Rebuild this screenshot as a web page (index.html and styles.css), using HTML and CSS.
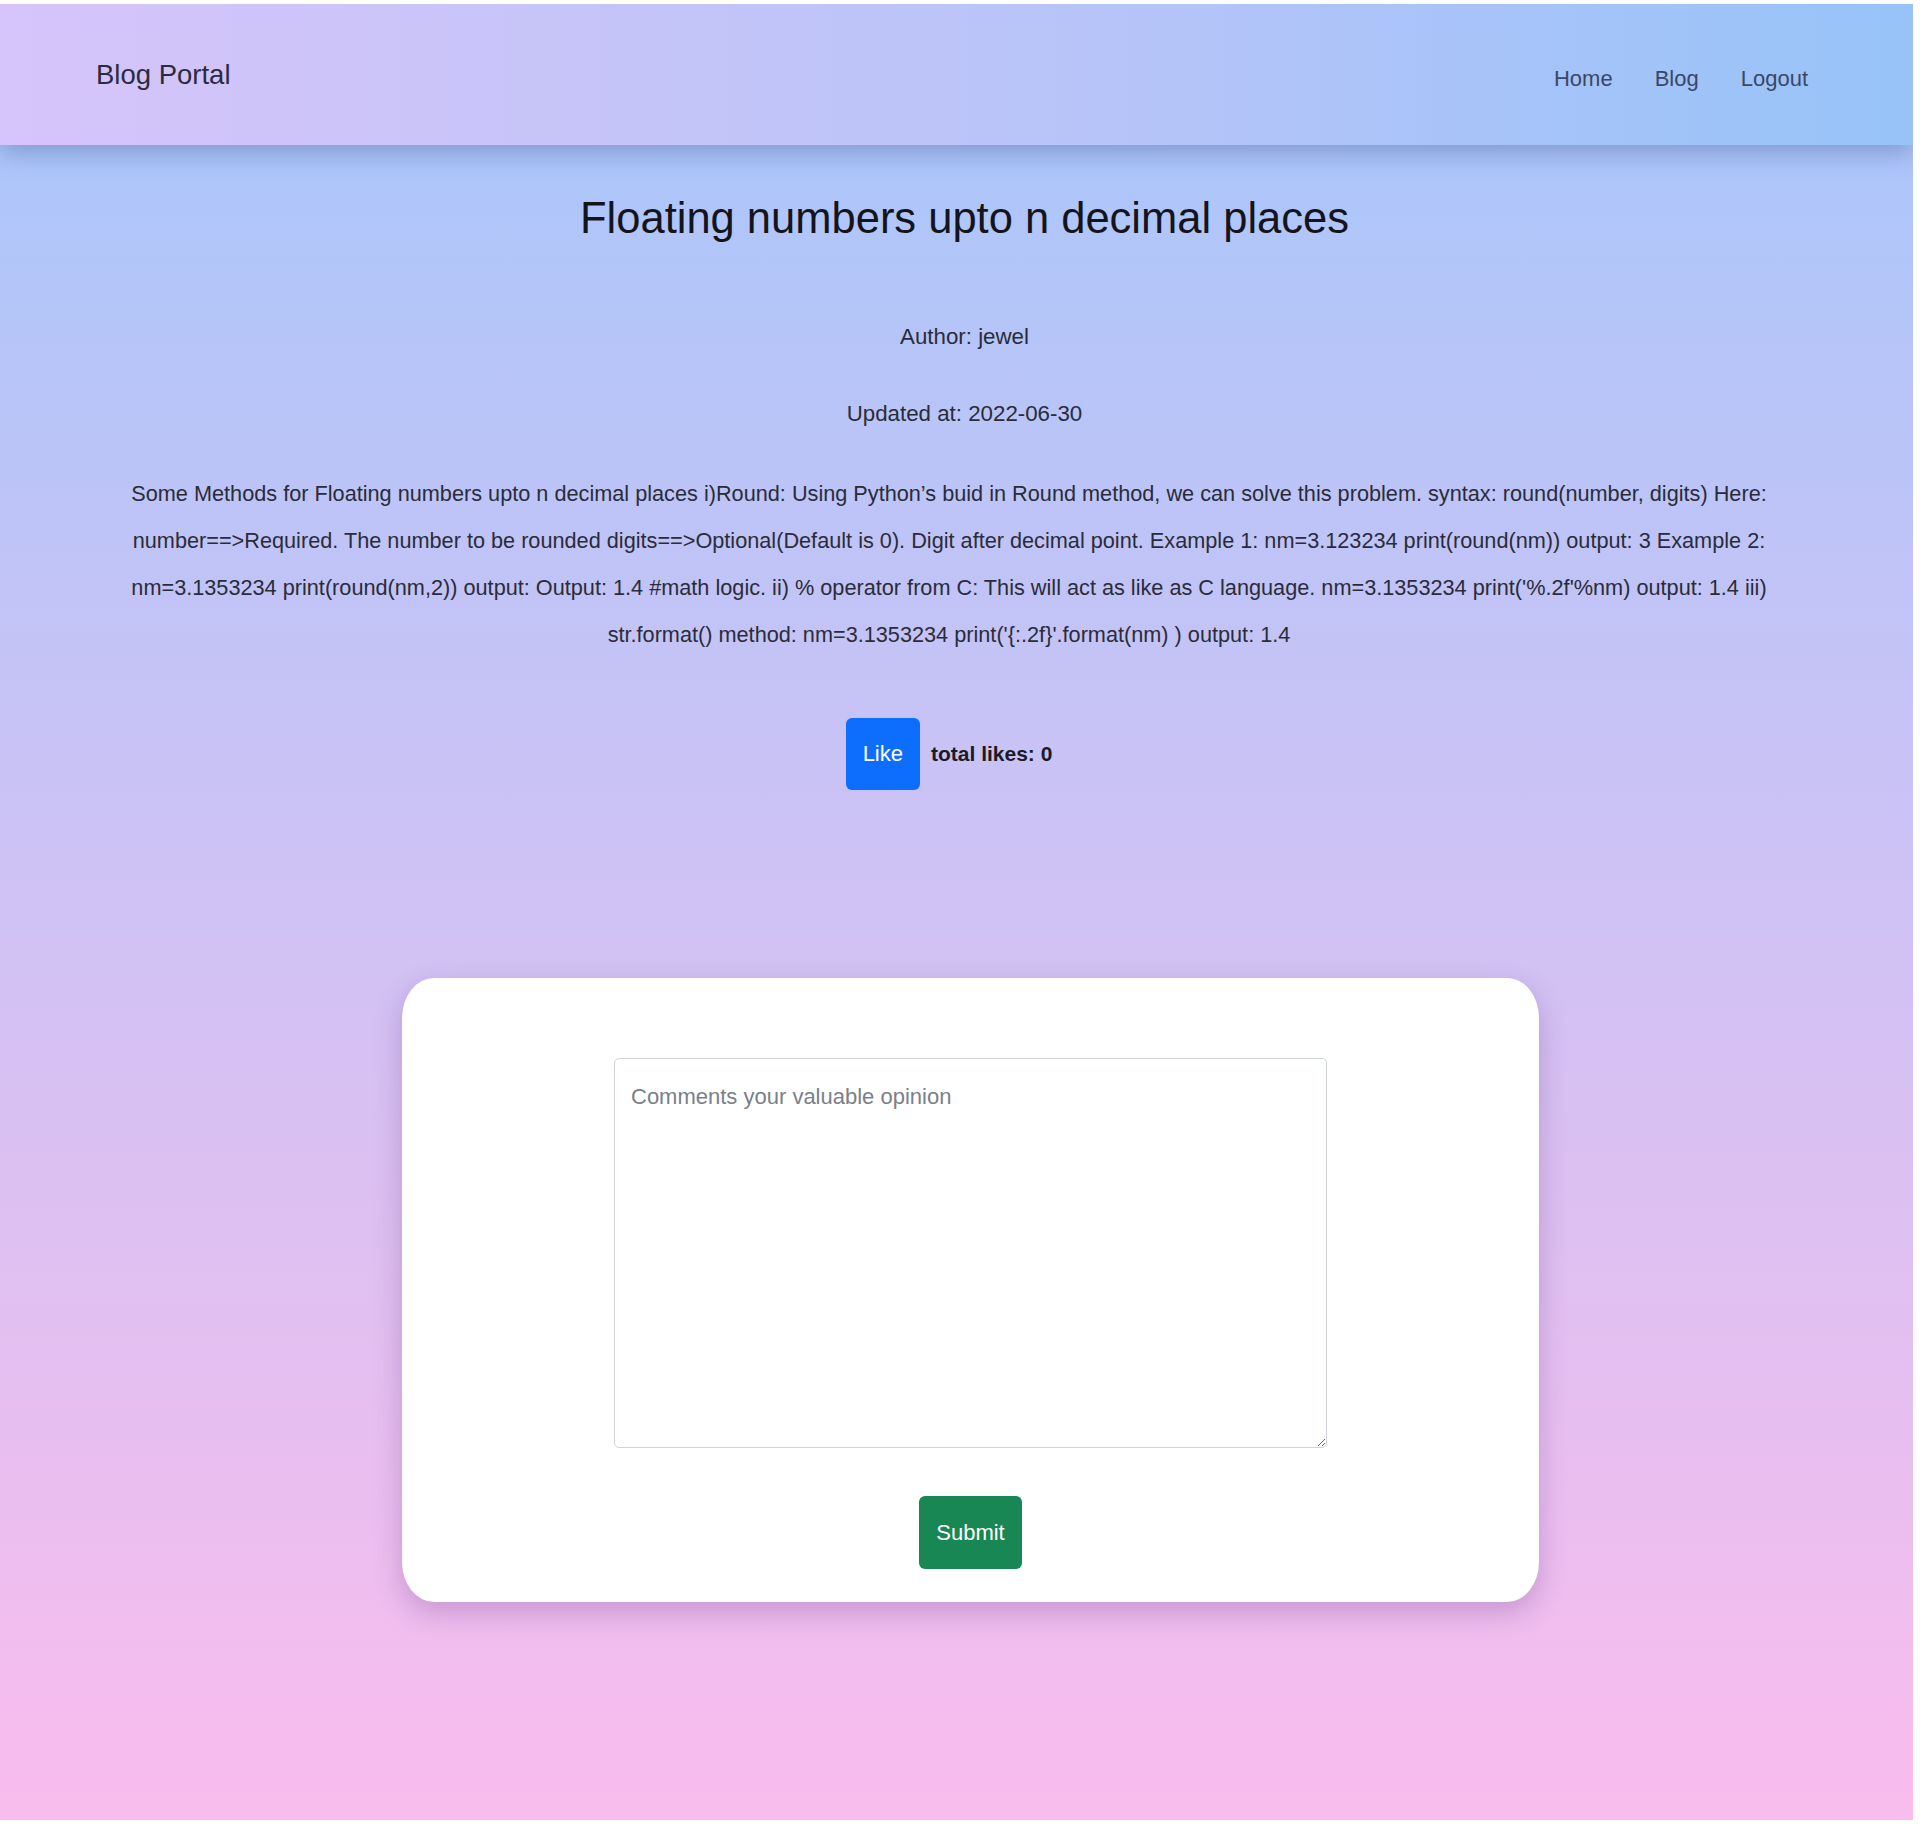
FILE: index.html
```html
<!DOCTYPE html>
<html lang="en">
<head>
<meta charset="utf-8">
<title>Blog Portal</title>
<link rel="stylesheet" href="styles.css">
</head>
<body>
<div class="page">
  <nav class="navbar">
    <a class="brand" href="#">Blog Portal</a>
    <ul class="nav-links">
      <li><a href="#">Home</a></li>
      <li><a href="#">Blog</a></li>
      <li><a href="#">Logout</a></li>
    </ul>
  </nav>
  <main class="post">
    <header class="post-head">
      <h1 class="post-title">Floating numbers upto n decimal places</h1>
      <p class="meta">Author: jewel</p>
      <p class="meta meta-last">Updated at: 2022-06-30</p>
    </header>
    <p class="post-body">Some Methods for Floating numbers upto n decimal places i)Round: Using Python’s buid in Round method, we can solve this problem. syntax: round(number, digits) Here: number==&gt;Required. The number to be rounded digits==&gt;Optional(Default is 0). Digit after decimal point. Example 1: nm=3.123234 print(round(nm)) output: 3 Example 2: nm=3.1353234 print(round(nm,2)) output: Output: 1.4 #math logic. ii) % operator from C: This will act as like as C language. nm=3.1353234 print('%.2f'%nm) output: 1.4 iii) str.format() method: nm=3.1353234 print('{:.2f}'.format(nm) ) output: 1.4</p>
    <div class="likes">
      <button class="btn btn-like" type="button">Like</button>
      <span class="like-count">total likes: 0</span>
    </div>
    <form class="comment-card">
      <textarea class="comment-input" placeholder="Comments your valuable opinion"></textarea>
      <button class="btn btn-submit" type="submit">Submit</button>
    </form>
  </main>
</div>
</body>
</html>
```
FILE: styles.css
```css
html {
  background: #ffffff;
}

body {
  margin: 0;
  font-family: "Liberation Sans", Arial, sans-serif;
  color: #212529;
}

.page {
  width: 1913px;
  height: 1816px;
  margin-top: 4px;
  overflow: hidden;
  background: linear-gradient(180deg, #adc6fa 140px, #f9bced 100%);
}

.navbar {
  position: relative;
  z-index: 1;
  height: 141px;
  box-sizing: border-box;
  padding: 0 105px 0 96px;
  display: flex;
  align-items: center;
  justify-content: space-between;
  background: linear-gradient(90deg, #d6c4fa 0%, #bcc4f8 50%, #97c3f9 100%);
  box-shadow: 0 8px 24px rgba(40, 60, 120, 0.32);
}

.brand {
  font-size: 27.5px;
  color: #2d2b42;
  text-decoration: none;
}

.nav-links {
  list-style: none;
  margin: 0;
  padding: 9px 0 0;
  display: flex;
  gap: 42px;
}

.nav-links a {
  font-size: 22px;
  color: #3b4766;
  text-decoration: none;
}

.post-head {
  padding: 41px 0 0 16px;
  text-align: center;
}

.post-title {
  margin: 0 0 67px;
  font-size: 43.5px;
  line-height: 64px;
  font-weight: 400;
  color: #14141c;
}

.meta {
  margin: 0 0 37px;
  font-size: 22.3px;
  line-height: 40px;
  color: #2a2c3a;
}

.meta-last {
  margin-bottom: 36px;
}

.post-body {
  width: 1700px;
  margin: 0 0 0 99px;
  font-size: 21.7px;
  line-height: 47px;
  text-align: center;
  color: #2a2c3a;
}

.likes {
  width: 1700px;
  margin: 60px 0 0 99px;
  display: flex;
  justify-content: center;
  align-items: center;
  gap: 11px;
}

.btn {
  border: none;
  border-radius: 6px;
  font-family: inherit;
  font-size: 22px;
  color: #ffffff;
  display: inline-flex;
  align-items: center;
  justify-content: center;
  cursor: pointer;
}

.btn-like {
  height: 72px;
  padding: 0 17px;
  background: #0d6efd;
}

.like-count {
  font-size: 21px;
  font-weight: 700;
  color: #1b1b28;
}

.comment-card {
  width: 1137px;
  height: 624px;
  box-sizing: border-box;
  margin: 188px 0 0 402px;
  padding: 80px 0 0;
  background: #ffffff;
  border-radius: 32px / 40px;
  box-shadow: 0 10px 28px rgba(90, 50, 130, 0.28);
  display: flex;
  flex-direction: column;
  align-items: center;
  gap: 48px;
}

.comment-input {
  width: 713px;
  height: 390px;
  box-sizing: border-box;
  padding: 18px 16px;
  border: 1px solid #cfd3da;
  border-radius: 5px;
  font-family: inherit;
  font-size: 22px;
  line-height: 40px;
  color: #212529;
  background: #ffffff;
}

.comment-input::placeholder {
  color: #7a8089;
}

.btn-submit {
  height: 73px;
  padding: 0 17px;
  background: #198754;
}
```
